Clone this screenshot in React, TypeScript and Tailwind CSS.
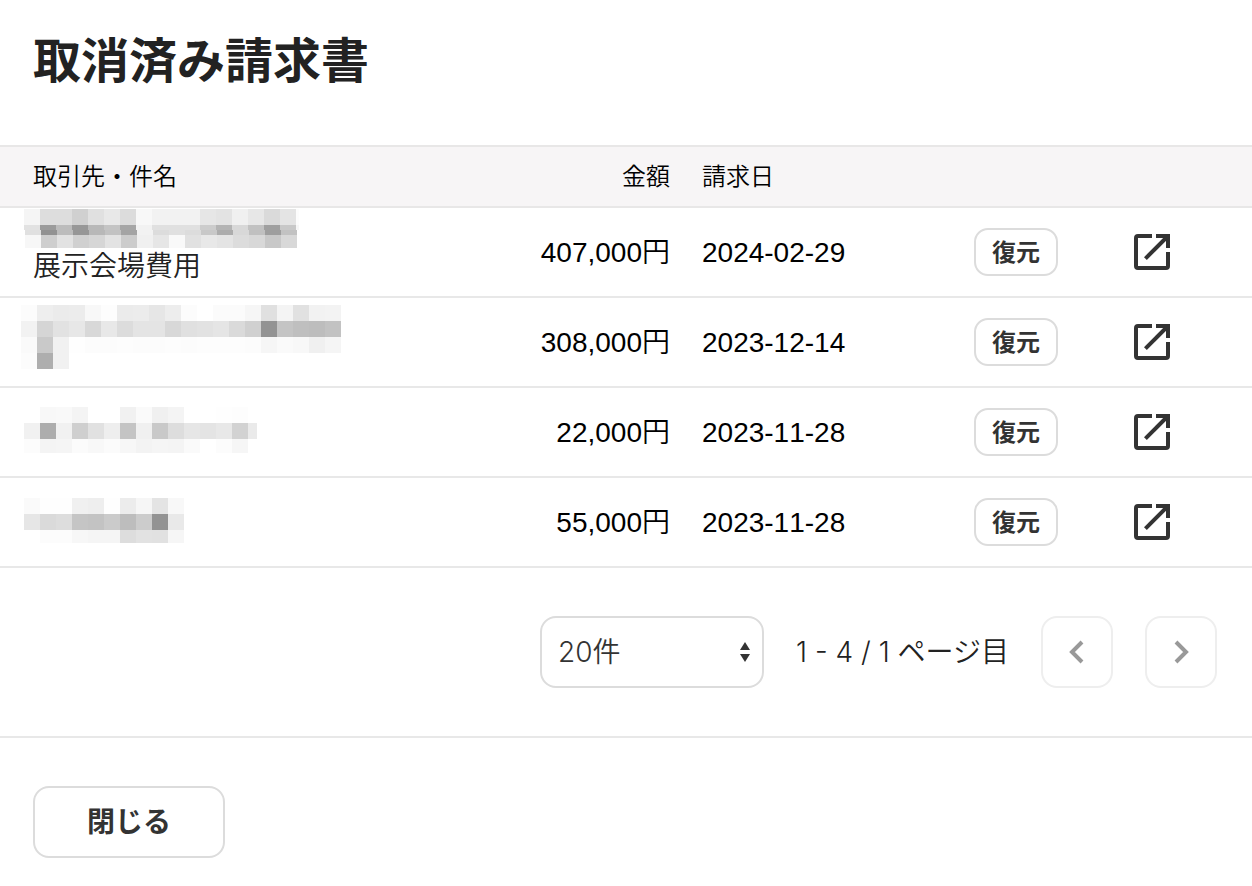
import React, { useState } from 'react';

interface Band {
  x: number;
  y: number;
  h: number;
  tones: string;
  lastWidth?: number;
}

interface Invoice {
  id: number;
  subject?: string;
  amount: string;
  date: string;
  mask: Band[];
}

const BLOCK = 16;

// Each band is one line of grey blocks hiding the client name
const invoices: Invoice[] = [
  {
    id: 1,
    subject: '展示会場費用',
    amount: '407,000円',
    date: '2024-02-29',
    mask: [
      { x: 3, y: 1, h: 16, lastWidth: 3, tones: 'f5 dd dd d0 e0 e8 dc f8 f2 f2 f2 e6 e3 f0 e7 da e4 fc' },
      { x: 3, y: 17, h: 5, lastWidth: 3, tones: 'e2 9b bc 98 b8 c4 a6 f2 e0 e0 e0 cc b4 d8 c2 a0 c8 f6' },
      { x: 4, y: 22, h: 5, tones: 'e0 92 bc 96 b8 c2 a4 f2 dc e0 dc c8 ac d8 c0 9e c2' },
      { x: 4, y: 27, h: 13, tones: 'f7 ce e2 d0 d6 e3 cc f0 e6 f9 e1 e8 e4 dc d8 c8 d8' },
    ],
  },
  {
    id: 2,
    amount: '308,000円',
    date: '2023-12-14',
    mask: [
      { x: 0, y: 7, h: 16, tones: 'fc ee eb ec f8 fd eb ec e6 ed fc ff fb fb f6 e0 f4 e1 f2 f3' },
      { x: 0, y: 23, h: 16, tones: 'f2 d5 e2 e7 d8 e8 dc e4 e4 d8 e0 e2 e5 da d0 93 c4 bf bd c2' },
      { x: 0, y: 39, h: 16, tones: 'fa c9 f1 fe fc fc fd fc fc fd fc fd fd fd fc f6 fa f8 f0 f5' },
      { x: 0, y: 55, h: 16, tones: 'fc ae f1' },
    ],
  },
  {
    id: 3,
    amount: '22,000円',
    date: '2023-11-28',
    mask: [
      { x: 3, y: 19, h: 16, tones: 'ff f8 f9 f4 ff ff f1 fa f0 f4 ff ff fe fd' },
      { x: 3, y: 35, h: 16, lastWidth: 9, tones: 'f1 ad f1 cf e1 ee c4 f0 c9 dd e6 e4 e8 d2 ea' },
      { x: 3, y: 51, h: 14, tones: 'fc f4 f5 fb f8 fb f7 f3 f5 f4 fa ff fc f6' },
    ],
  },
  {
    id: 4,
    amount: '55,000円',
    date: '2023-11-28',
    mask: [
      { x: 3, y: 20, h: 16, tones: 'fa fe fe f0 ee fe ec f6 e4 f8' },
      { x: 3, y: 36, h: 16, tones: 'e6 da dd c5 c3 cb bd cc 93 e9' },
      { x: 3, y: 52, h: 13, tones: 'ff fc fc f7 f5 f5 dd e2 e1 f6' },
    ],
  },
];

const MaskedName: React.FC<{ bands: Band[]; height: number }> = ({ bands, height }) => (
  <svg width="320" height={height} className="block" shapeRendering="crispEdges" aria-hidden="true">
    {bands.map(band =>
      band.tones.split(' ').map((tone, i, all) => (
        <rect
          key={`${band.y}-${i}`}
          x={band.x + i * BLOCK}
          y={band.y}
          width={i === all.length - 1 && band.lastWidth ? band.lastWidth : BLOCK}
          height={band.h}
          fill={`#${tone}${tone}${tone}`}
        />
      ))
    )}
  </svg>
);

const OpenIcon = () => (
  <svg width="36" height="36" viewBox="0 0 36 36" fill="none" stroke="#333" strokeWidth="4" className="block">
    <path d="M18 2H4a2 2 0 0 0-2 2v28a2 2 0 0 0 2 2h28a2 2 0 0 0 2-2V18" />
    <path d="M22 2h12v12" />
    <path d="M34 2 11.4 24.6" />
  </svg>
);

const Chevron: React.FC<{ points: string }> = ({ points }) => (
  <svg width="24" height="24" viewBox="0 0 24 24" fill="none" stroke="#999" strokeWidth="4" className="block">
    <polyline points={points} />
  </svg>
);

const pagerButton =
  'flex size-18 items-center justify-center rounded-2xl border-2 border-[#eeeeee] bg-white';

export default function App() {
  const [perPage, setPerPage] = useState('20');

  return (
    <main className="bg-white font-['Liberation_Sans','Noto_Sans_CJK_JP',sans-serif] text-[#222]" lang="ja">
      <h1 className="px-[33px] pt-[26px] pb-[47px] text-5xl leading-[72px] font-bold">取消済み請求書</h1>

      <table className="w-full table-fixed border-separate border-spacing-0 text-[28px] font-[350] text-black [font-kerning:none]">
        <colgroup>
          <col />
          <col className="w-[170px]" />
          <col className="w-[272px]" />
          <col className="w-[116px]" />
          <col className="w-[178px]" />
        </colgroup>
        <thead className="bg-[#f7f5f6] text-2xl">
          <tr className="h-[63px] [&>*]:border-y-2 [&>*]:border-[#e8e7e7] [&>*]:p-0 [&>*]:font-[350]">
            <th scope="col" className="text-left"><span className="pl-[33px]">取引先・件名</span></th>
            <th scope="col" className="text-right"><span className="pr-4">金額</span></th>
            <th scope="col" className="text-left"><span className="pl-4">請求日</span></th>
            <td />
            <td />
          </tr>
        </thead>
        <tbody>
          {invoices.map(inv => (
            <tr key={inv.id} className="h-[90px] [&>td]:border-b-2 [&>td]:border-[#e8e8e8]">
              <td className="p-0 pl-[21px] align-top">
                <MaskedName bands={inv.mask} height={inv.subject ? 40 : 88} />
                {inv.subject && <div className="pl-3 leading-[38px] text-[#222]">{inv.subject}</div>}
              </td>
              <td className="p-0 pt-0.5 pr-4 text-right">{inv.amount}</td>
              <td className="p-0 pt-0.5 pl-4">{inv.date}</td>
              <td className="p-0 pl-4">
                <button
                  type="button"
                  className="flex h-12 w-21 items-center justify-center rounded-[14px] border-2 border-[#dcdcdc] bg-white pt-0.5 text-2xl leading-9 font-bold text-[#333]"
                >
                  復元
                </button>
              </td>
              <td className="p-0 pl-15">
                <a href="#" aria-label="請求書を開く" className="block w-9">
                  <OpenIcon />
                </a>
              </td>
            </tr>
          ))}
        </tbody>
      </table>

      {/* Pagination */}
      <div className="flex items-center justify-end gap-8 border-b-2 border-[#e8e8e8] py-12 pr-[35px] font-['Inter','Noto_Sans_CJK_JP',sans-serif] text-[28px] font-[350] text-[#222]">
        <div className="relative">
          <select
            aria-label="表示件数"
            value={perPage}
            onChange={e => setPerPage(e.target.value)}
            className="h-18 w-56 appearance-none rounded-2xl border-2 border-[#dcdcdc] bg-white pl-4 text-[#333]"
          >
            <option value="20">20件</option>
            <option value="50">50件</option>
            <option value="100">100件</option>
          </select>
          <svg width="10" height="20" viewBox="0 0 10 20" fill="#333" className="pointer-events-none absolute top-[26px] right-[14px]">
            <path d="M5 0l5 8H0z" />
            <path d="M5 20l5-8H0z" />
          </svg>
        </div>
        <p className="leading-10">1 - 4 / 1 ページ目</p>
        <button type="button" aria-label="前のページ" className={pagerButton}>
          <Chevron points="17,2 7,12 17,22" />
        </button>
        <button type="button" aria-label="次のページ" className={pagerButton}>
          <Chevron points="7,2 17,12 7,22" />
        </button>
      </div>

      <div className="px-[33px] pt-12 pb-7">
        <button
          type="button"
          className="flex h-18 w-48 items-center justify-center rounded-2xl border-2 border-[#dcdcdc] bg-white pt-0.5 text-[28px] leading-10 font-bold text-[#333]"
        >
          閉じる
        </button>
      </div>
    </main>
  );
}
